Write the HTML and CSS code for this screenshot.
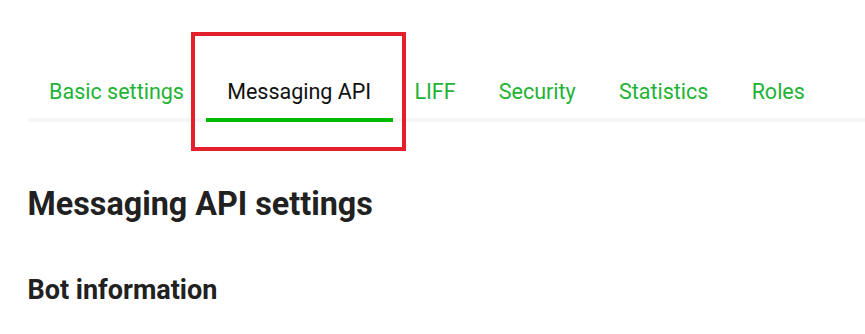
FILE: index.html
```html
<!DOCTYPE html>
<html lang="en">
<head>
<meta charset="utf-8">
<title>Messaging API settings</title>
<link rel="stylesheet" href="styles.css">
</head>
<body>
<div class="page">
  <nav class="tabs">
    <a class="tab">Basic settings</a>
    <a class="tab tab-active">Messaging API</a>
    <a class="tab">LIFF</a>
    <a class="tab">Security</a>
    <a class="tab">Statistics</a>
    <a class="tab">Roles</a>
  </nav>
  <h1 class="title">Messaging API settings</h1>
  <h2 class="subtitle">Bot information</h2>
</div>
<div class="highlight"></div>
</body>
</html>
```

FILE: styles.css
```css
html, body {
  margin: 0;
  padding: 0;
  background: #ffffff;
}
body {
  font-family: Roboto, "Liberation Sans", Arial, sans-serif;
  color: #222222;
  width: 865px;
  height: 334px;
  overflow: hidden;
  position: relative;
}
.page {
  padding-left: 27.5px;
}
.tabs {
  display: flex;
  margin-top: 63px;
  border-bottom: 4px solid #f5f5f5;
}
.tab {
  font-size: 21.5px;
  line-height: 24px;
  padding: 17px 21.6px 14px;
  color: #1fb336;
  border-bottom: 4px solid transparent;
  margin-bottom: -4px;
  white-space: nowrap;
}
.tab-active {
  color: #111111;
  border-bottom-color: #00b900;
}
.title {
  margin: 62px 0 0;
  font-size: 32.3px;
  line-height: 40px;
  font-weight: 700;
  color: #212121;
}
.subtitle {
  margin: 50px 0 0;
  font-size: 27px;
  line-height: 32px;
  font-weight: 700;
  color: #212121;
}
.highlight {
  position: absolute;
  left: 191px;
  top: 32px;
  width: 207px;
  height: 111px;
  border: 4px solid #e3202c;
}
```
